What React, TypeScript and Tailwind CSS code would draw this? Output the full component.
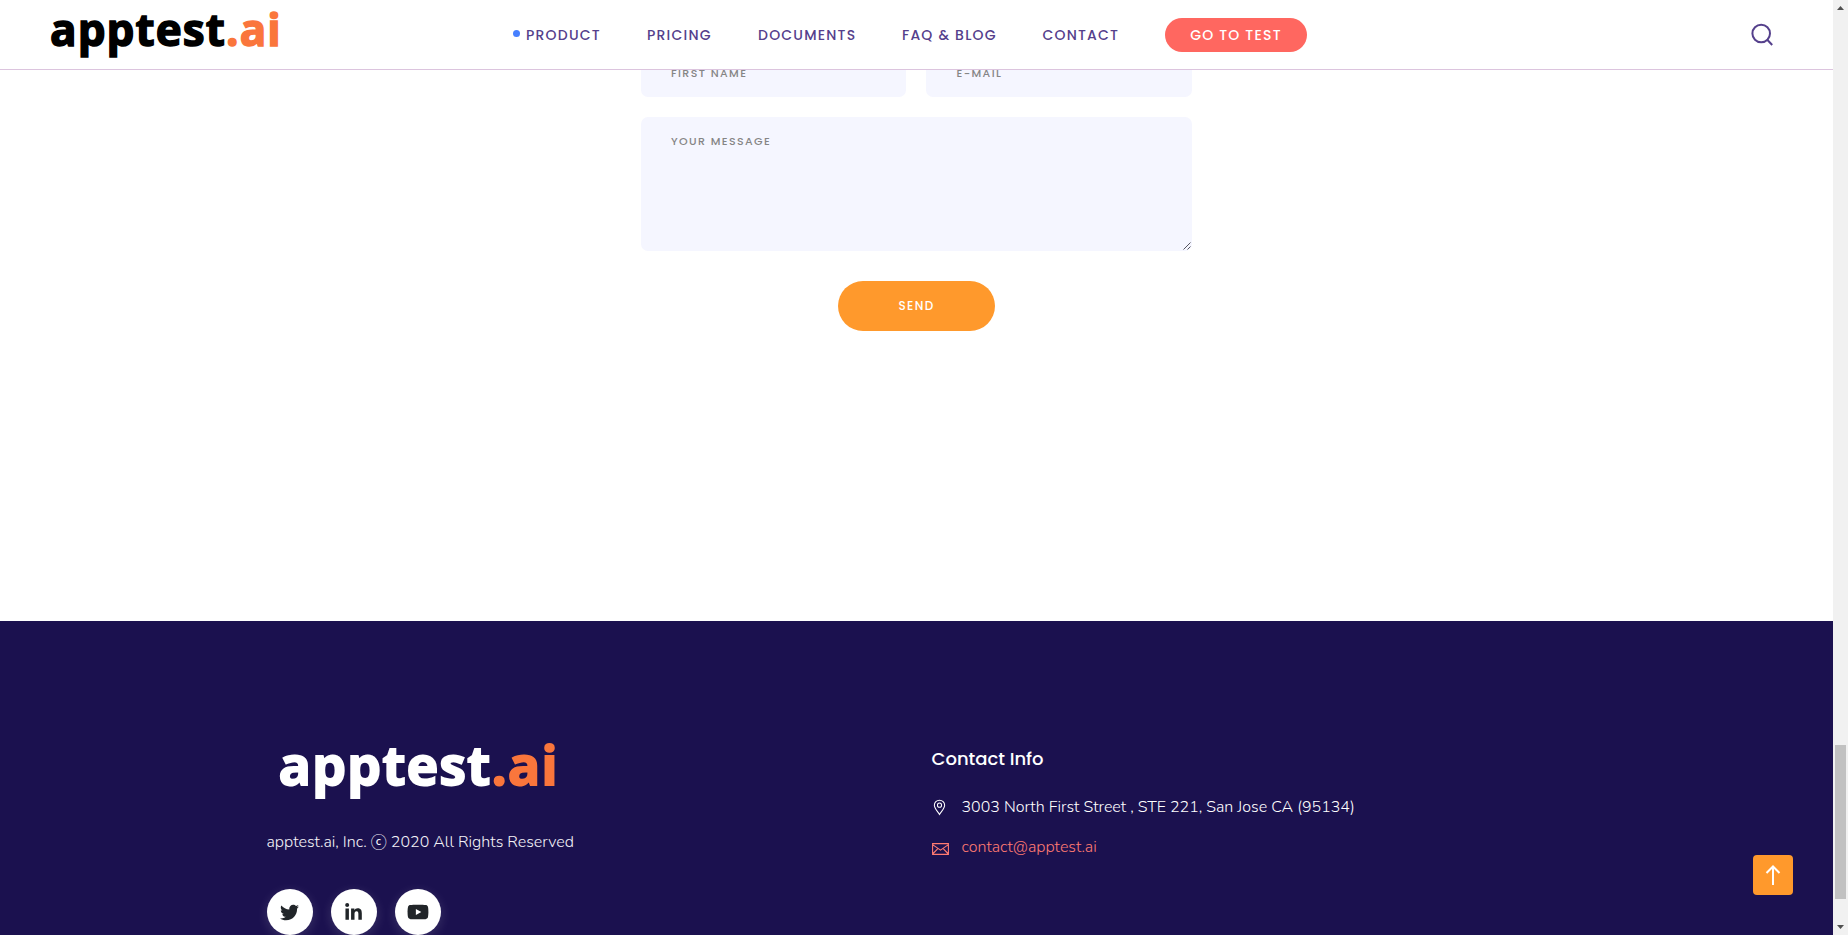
import React from "react";
import { FaTwitter, FaLinkedinIn, FaYoutube } from "react-icons/fa";

const poppins = "font-['Poppins','Inter',sans-serif]";
const nunito = "font-['Nunito','Open_Sans',sans-serif]";

const navItems = [
  { label: "PRODUCT", cls: "w-[121px]" },
  { label: "PRICING", cls: "w-[111px]" },
  { label: "DOCUMENTS", cls: "w-[144px]" },
  { label: "FAQ & BLOG", cls: "w-[140.5px]" },
  { label: "CONTACT", cls: "w-[122.5px]" },
];

function Header() {
  return (
    <header className="absolute inset-x-0 top-0 z-10 flex h-[70px] items-center border-b border-[#dcc4de] bg-white pl-[50px]">
      <div className="flex h-full w-[476px] items-start">
        <span className="font-['Open_Sans',sans-serif] text-[44px] font-bold leading-[58px] tracking-[1.1px] text-black [-webkit-text-stroke:1.5px_currentColor]">
          apptest<span className="text-[#fa763c]">.ai</span>
        </span>
      </div>
      <nav className={`relative mt-px flex items-center text-[14px] font-medium tracking-[1.2px] text-[#55408c] ${poppins}`}>
        <span className="absolute -left-[13px] top-[12px] size-[6.5px] rounded-full bg-[#4680ff]" />
        {navItems.map((n) => (
          <a key={n.label} className={`whitespace-nowrap ${n.cls}`}>{n.label}</a>
        ))}
        <a className="flex h-[34px] w-[142px] items-center justify-center whitespace-nowrap rounded-full bg-[#ff6760] text-white">
          GO TO TEST
        </a>
      </nav>
      <svg className="ml-auto mr-[59px] size-[24px]" viewBox="0 0 24 24" fill="none" stroke="#55408c" strokeWidth="2">
        <circle cx="11.2" cy="10.5" r="8.8" />
        <path d="M17 16.500l5.200 5.500" />
      </svg>
    </header>
  );
}

function ContactForm() {
  return (
    <section className={`flex h-[621px] flex-col items-center pt-[37px] text-[11px] font-medium tracking-[1.4px] text-[#858585] ${poppins}`}>
      <div className="flex w-[551px] gap-5">
        <div className="flex h-[60px] w-[265px] items-center rounded-[7px] bg-[#f5f6ff] pl-[30px] pt-3">FIRST NAME</div>
        <div className="flex h-[60px] flex-1 items-center rounded-[7px] bg-[#f5f6ff] pl-[30.5px] pt-3">E-MAIL</div>
      </div>
      <div className="mt-5 flex h-[134px] w-[551px] rounded-[7px] bg-[#f5f6ff] pl-[30px] pt-[16px]">
        <span>YOUR MESSAGE</span>
        <svg className="mb-px ml-auto mr-px mt-auto size-[8px]" viewBox="0 0 8 8" stroke="#55555f" strokeWidth="1">
          <path d="M0.5 7.5L7.5 0.5M4.5 7.5L7.5 4.5" />
        </svg>
      </div>
      <button className="mt-[30px] h-[50px] w-[157px] rounded-full bg-[#ff992c] text-[12px] font-medium tracking-[1.3px] text-white">SEND</button>
    </section>
  );
}

function Social({ children }: { children: React.ReactNode }) {
  return (
    <a className="flex size-[46px] items-center justify-center rounded-full bg-white text-[19px] text-[#212529] shadow-[0_3px_12px_rgba(255,255,255,0.14)]">
      {children}
    </a>
  );
}

function Footer() {
  return (
    <footer className={`flex h-[314px] bg-[#1b114f] pl-[266.5px] pt-[107px] text-[16px] font-light text-white ${nunito}`}>
      <div className="w-[665px]">
        <div className="ml-[12px] h-[76px] font-['Open_Sans',sans-serif] text-[54px] font-bold leading-[73px] tracking-[0.9px] [-webkit-text-stroke:1.8px_currentColor]">
          apptest<span className="text-[#fa763c]">.ai</span>
        </div>
        <p className="mt-[26px] flex h-6 items-center whitespace-nowrap text-[#f4f3f8]">
          apptest.ai, Inc.&nbsp;<span className="mb-[2px] font-['Noto_Sans_CJK_KR',sans-serif] font-normal">ⓒ</span>&nbsp;2020 All Rights Reserved
        </p>
        <div className="mt-[35px] flex gap-[18px]">
          <Social><FaTwitter /></Social>
          <Social><FaLinkedinIn /></Social>
          <Social><FaYoutube className="size-[22px]" /></Social>
        </div>
      </div>
      <div>
        <h3 className={`mt-[17px] text-[18px] font-medium leading-[28px] ${poppins}`}>Contact Info</h3>
        <div className="mt-[22px] flex h-6 items-center whitespace-nowrap">
          <svg className="mr-[15px] h-[17px] w-[15px]" viewBox="0 0 16 17" fill="none" stroke="currentColor" strokeWidth="1.1">
            <path d="M8 16C6 12.500 2.500 9.500 2.500 6.200a5.500 5.500 0 0 1 11 0C13.500 9.500 10 12.500 8 16z" />
            <circle cx="8" cy="6" r="2.200" />
          </svg>
          <span>3003 North First Street , STE 221, San Jose CA (95134)</span>
        </div>
        <div className="mt-4 flex h-6 items-center whitespace-nowrap text-[#ff7b72]">
          <svg className="mr-[13px] mt-[4px] h-3 w-[17px]" viewBox="0 0 17 12" fill="none" stroke="currentColor" strokeWidth="1.100">
            <path d="M.6.6h15.800v10.800H.6zM.6 1.600l7.900 5.600 7.900-5.600M.6 11l5-5.200M16.400 11l-5-5.200" />
          </svg>
          <span>contact@apptest.ai</span>
        </div>
      </div>
    </footer>
  );
}

export default function App() {
  return (
    <div className="flex h-[935px] w-[1848px] overflow-hidden bg-white">
      <main className="relative w-[1833px]">
        <Header />
        <ContactForm />
        <Footer />
        <button className="absolute bottom-[40px] right-[40px] flex size-10 items-center justify-center rounded-[4px] bg-[#ff992c]">
          <svg className="size-5" viewBox="0 0 20 20" fill="none" stroke="white" strokeWidth="2">
            <path d="M10 20V1.500M3.500 8L10 1.500L16.500 8" />
          </svg>
        </button>
      </main>
      <aside className="flex w-[15px] flex-col items-center bg-[#f1f1f1]">
        <svg className="mt-[6px] h-1 w-[7px]" viewBox="0 0 7 4" fill="#505050"><path d="M0 4L3.500 0L7 4z" /></svg>
        <div className="mt-[735px] h-[154px] w-[11px] bg-[#c1c1c1]" />
        <svg className="mt-[26px] h-1 w-[7px]" viewBox="0 0 7 4" fill="#505050"><path d="M0 0L3.500 4L7 0z" /></svg>
      </aside>
    </div>
  );
}
